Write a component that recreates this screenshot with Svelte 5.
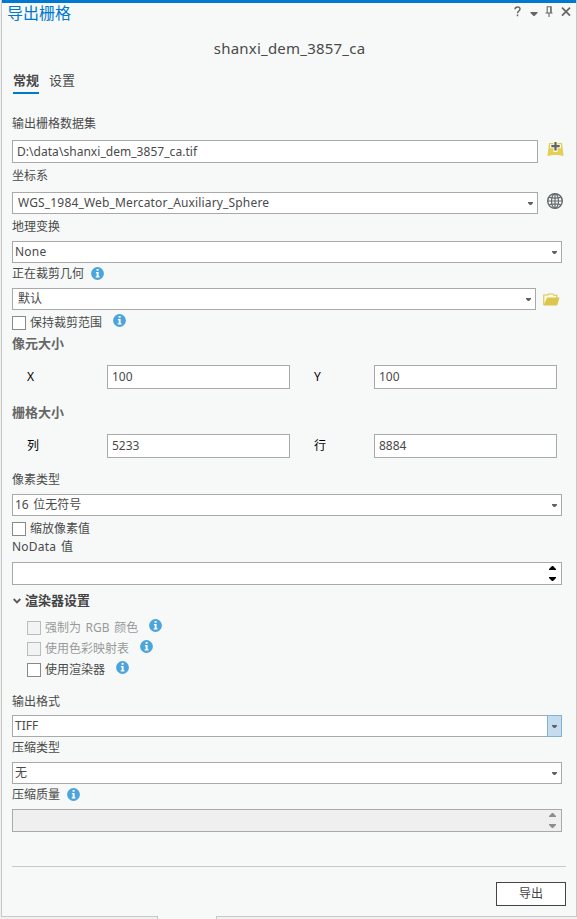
<script>
  const title = '导出栅格';
</script>

{#snippet info()}
  <svg class="info" width="13" height="13" viewBox="0 0 13 13">
    <circle cx="6.5" cy="6.5" r="6.4" fill="#4ba5da" />
    <path d="M5.6 2h2v1.8h-2zM4.9 5h2.7v4.3h.9v1.2H4.7V9.3h1V6.2h-.8z" fill="#fff" />
  </svg>
{/snippet}

{#snippet arrow()}
  <svg class="arrow" width="5" height="3" viewBox="0 0 5 3"><path d="M0 0h5v1L3.2 3H1.8L0 1z" fill="#626262" /></svg>
{/snippet}

{#snippet spinner(color)}
  <svg class="spin" width="7" height="15" viewBox="0 0 7 15">
    <path d="M0 4V3l3-3h1l3 3v1zM0 11h7v1l-3 3H3l-3-3z" fill={color} />
  </svg>
{/snippet}

<div class="page">
  <section class="panel">
    <header class="titlebar">
      <h1>{title}</h1>
      <div class="tools">
        <svg width="58" height="12" viewBox="0 0 58 12" fill="none" stroke="#666" stroke-width="1.5">
          <path d="M1 3.2C1.2 .3 6 .1 6 3c0 2-2.5 2-2.5 4.3M3.5 8.6v1.7" />
          <path d="M16.5 6h7v1l-3 3h-1l-3-3z" fill="#666" stroke="none" />
          <path d="M33.2 7V.7h4V7M31.5 7h7M35 7v4M36.7 1v6" stroke-width="1.1" />
          <path d="M48 1.7l8 8M56 1.7l-8 8" stroke-width="1.7" />
        </svg>
      </div>
    </header>
    <h2>shanxi_dem_3857_ca</h2>
    <nav><span class="active">常规</span><span>设置</span></nav>

    <div class="label first">输出栅格数据集</div>
    <div class="line">
      <div class="box tall short path"><span>D:\data\shanxi_dem_3857_ca.tif</span></div>
      <svg class="side raise" width="17" height="16" viewBox="0 0 17 16">
        <path d="M2 2h13l1.6 13-5.6-1H6l-5.6 1z" fill="#e4cf55" />
        <path d="M6.5 0h4v3.2H14v4h-3.5V11h-4V7.2H3V3.2h3.5z" fill="#fffbe5" />
        <path d="M8.5 1v8.4M4.3 5.2h8.4" stroke="#626468" stroke-width="2.2" />
      </svg>
    </div>
    <div class="label l2">坐标系</div>
    <div class="line">
      <div class="box short coord"><span>WGS_1984_Web_Mercator_Auxiliary_Sphere</span>{@render arrow()}</div>
      <svg class="side globe" width="16" height="16" viewBox="0 0 16 16" fill="none" stroke="#65696d" stroke-width="1.2">
        <circle cx="8" cy="8" r="7.3" stroke-width="1.4" />
        <ellipse cx="8" cy="8" rx="3.5" ry="7.2" />
        <path d="M8 .8v14.4M.8 8h14.4M2.2 4.4q5.8 1.5 11.6 0M2.2 11.6q5.8-1.5 11.6 0" />
      </svg>
    </div>
    <div class="label l3">地理变换</div>
    <div class="box none"><span>None</span>{@render arrow()}</div>
    <div class="label l4">正在裁剪几何{@render info()}</div>
    <div class="line">
      <div class="box shorter inset"><span>默认</span>{@render arrow()}</div>
      <svg class="side" width="17" height="13" viewBox="0 0 17 13">
        <path d="M.8 12V2h4l1-1h4l1 1.2h3V5" fill="#fffce8" stroke="#d9c24c" stroke-width="1.1" />
        <path d="M4 4.5h12.5L14.2 12.5H.5z" fill="#dcc64b" />
      </svg>
    </div>
    <label class="check c1"><i></i>保持裁剪范围{@render info()}</label>
    <h3 class="s1">像元大小</h3>
    <div class="pair">
      <b>X</b><div class="num">100</div><b>Y</b><div class="num">100</div>
    </div>
    <h3 class="s2">栅格大小</h3>
    <div class="pair">
      <b>列</b><div class="num">5233</div><b>行</b><div class="num">8884</div>
    </div>
    <div class="label l5">像素类型</div>
    <div class="box"><span>16 位无符号</span>{@render arrow()}</div>
    <label class="check c1">
      <i></i>缩放像素值
    </label>
    <div class="label l6">NoData 值</div>
    <div class="box tall"><span></span>{@render spinner('#000')}</div>
    <h4>
      <svg width="8" height="6" viewBox="0 0 8 6"><path d="M.7 1L4 4.4 7.3 1" fill="none" stroke="#595959" stroke-width="1.8" /></svg>渲染器设置
    </h4>
    <div class="group">
      <label class="check off rgb"><i></i>强制为 RGB 颜色{@render info()}</label>
      <label class="check off"><i></i>使用色彩映射表{@render info()}</label>
      <label class="check"><i></i>使用渲染器{@render info()}</label>
    </div>
    <div class="label l7">输出格式</div>
    <div class="box tiff"><span>TIFF</span><em>{@render arrow()}</em></div>
    <div class="label l4">压缩类型</div>
    <div class="box"><span>无</span>{@render arrow()}</div>
    <div class="label l4">压缩质量{@render info()}</div>
    <div class="box tall disabled"><span></span>{@render spinner('#8d8d8d')}</div>
    <footer><button>导出</button></footer>
  </section>
  <div class="strip"><span class="a"></span><span class="gap"></span><span class="b"></span></div>
</div>

<style>
  :global(body) { margin: 0; background: #f0f0f0; }
  * { box-sizing: border-box; }
  .page {
    width: 577px; height: 919px; overflow: hidden; padding-left: 1px;
    font: 12px/18px "Noto Sans", "Noto Sans CJK SC", sans-serif; color: #4a4a4a; word-spacing: 1.5px;
  }
  .panel {
    height: 916px; background: #f7f9f9; border: 1px solid #c8c8c8;
    border-width: 0 1px 0 1px; padding: 0 10px; display: flex; flex-direction: column;
  }
  .panel > * { flex: none; }
  .titlebar {
    height: 31px; margin: 0 -10px; padding: 0 4px 0 5px; border-top: 3px solid #0078d0;
    display: flex; justify-content: space-between;
  }
  h1, h2, h3, h4 { margin: 0; }
  h1 { font-size: 16px; line-height: 20px; font-weight: 400; color: #0078d0; }
  .tools { padding-top: 3px; height: 20px; }
  .tools svg { display: block; }
  h2 { height: 41px; padding-top: 6px; font-size: 15px; line-height: 22px; font-weight: 400; text-align: center; padding-left: 1px; letter-spacing: .22px; }
  nav { height: 22px; padding-left: 1px; display: flex; gap: 10px; font-size: 13px; line-height: 16px; }
  nav span { height: 22px; }
  nav .active { font-weight: 700; border-bottom: 2px solid #0079c8; }
  .label { display: flex; align-items: flex-start; height: 25px; padding-top: 2px; }
  .label .info { margin: 2px 0 0 7px; }
  .first { height: 46px; padding-top: 21px; }
  .l2 { height: 29px; padding-top: 4px; }
  .l3 { height: 27px; padding-top: 4px; }
  .l5 { height: 36px; padding-top: 13px; }
  .l6 { height: 20px; padding-top: 0; line-height: 10px; letter-spacing: .2px; }
  .l7 { height: 35px; padding-top: 13px; }
  .line { display: flex; align-items: center; }
  .box {
    width: 550px; height: 22px; border: 1px solid #a9a9a9; background: #fff;
    display: flex; align-items: center; justify-content: space-between; padding: 0 4px 0 2px; white-space: nowrap;
  }
  .tall { height: 23px; padding-right: 5px; }
  .short { width: 526px; }
  .shorter { width: 524px; }
  .path { padding-left: 4px; letter-spacing: .04px; }
  .coord, .inset { padding-left: 5px; }
  .coord { letter-spacing: .16px; }
  .none { letter-spacing: .2px; }
  .arrow { display: block; }
  .spin { display: block; }
  .disabled { background: #efefef; }
  .side { margin-left: 9px; }
  .shorter + .side { margin-left: 7px; }
  .raise { position: relative; top: -3px; }
  .globe { position: relative; top: -2px; }
  .tiff { padding-right: 0; }
  .tiff em {
    width: 15px; height: 22px; margin: -1px -1px -1px 0; border: 1px solid #7eb2da; background: #c5dcee;
    display: flex; align-items: center; justify-content: center;
  }
  .check { display: flex; align-items: center; height: 21px; }
  .check i { width: 14px; height: 14px; border: 1px solid #898989; background: #fff; margin-right: 4px; }
  .check .info { margin: -4px 0 0 11px; }
  .c1 { height: 26px; padding-top: 0; }
  .c1 .info { margin-top: -5px; }
  .off { color: #999; }
  .off i { border-color: #bcbcbc; background: #f1f3f4; }
  h3 { font-size: 13px; line-height: 18px; color: #666; }
  .s1 { height: 29px; line-height: 15px; }
  .s2 { height: 45px; padding-top: 14px; }
  .pair { display: flex; align-items: center; height: 24px; padding-left: 15px; }
  .pair b { width: 80px; font-weight: 400; color: #000; }
  .pair b:nth-of-type(2) { width: 60px; margin-left: 24px; }
  .num { width: 183px; height: 24px; border: 1px solid #a9a9a9; background: #fff; padding-left: 4px; line-height: 22px; }
  h4 { height: 32px; padding: 6px 0 0 1px; font-size: 13px; line-height: 18px; color: #444; display: flex; gap: 4px; }
  h4 svg { margin-top: 7px; }
  .group { padding-left: 15px; height: 63px; }
  footer { width: 554px; margin-top: 34px; border-top: 1px solid #c8c8c8; padding-top: 15px; display: flex; justify-content: flex-end; }
  button { width: 70px; height: 24px; padding: 0; border: 1px solid #444; background: #fff; color: #444; font: inherit; }
  .strip { display: flex; height: 3px; }
  .strip span { border-top: 1px solid #c8c8c8; background: #f0f0f0; }
  .strip .a { width: 157px; border-right: 1px solid #c8c8c8; }
  .strip .gap { width: 58px; background: #f7f9f9; border-top-color: #f7f9f9; }
  .strip .b { flex: 1; border-left: 1px solid #c8c8c8; }
</style>
